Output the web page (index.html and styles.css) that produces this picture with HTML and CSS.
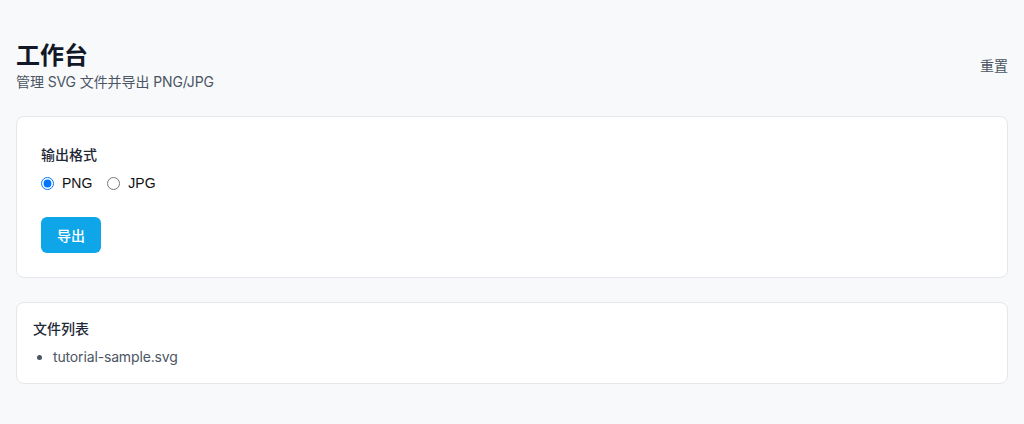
FILE: index.html
```html
<!DOCTYPE html>
<html lang="zh-CN">
<head>
<meta charset="utf-8">
<title>工作台</title>
<link rel="stylesheet" href="styles.css">
</head>
<body>
<div class="page">
  <header class="header">
    <div class="titles">
      <h1 class="title">工作台</h1>
      <p class="subtitle">管理 SVG 文件并导出 PNG/JPG</p>
    </div>
    <button class="reset" type="button">重置</button>
  </header>

  <section class="card card-export">
    <div class="label">输出格式</div>
    <div class="radios">
      <label class="radio"><input type="radio" name="fmt" checked> <span>PNG</span></label>
      <label class="radio"><input type="radio" name="fmt"> <span>JPG</span></label>
    </div>
    <button class="btn" type="button">导出</button>
  </section>

  <section class="card card-files">
    <div class="files-title">文件列表</div>
    <ul class="files">
      <li>tutorial-sample.svg</li>
    </ul>
  </section>
</div>
</body>
</html>
```
FILE: styles.css
```css
* { box-sizing: border-box; }
html, body { margin: 0; padding: 0; }
body {
  background: #f8f9fb;
  font-family: "Inter", "Noto Sans CJK SC", sans-serif;
  color: #111827;
}
.page {
  padding: 40px 16px 24px;
  display: flex;
  flex-direction: column;
  gap: 24px;
}
.header {
  display: flex;
  align-items: center;
  justify-content: space-between;
}
.title {
  margin: 0;
  font-size: 24px;
  line-height: 32px;
  font-weight: 700;
  color: #111827;
}
.subtitle {
  margin: 0;
  font-size: 14px;
  line-height: 20px;
  color: #4b5563;
  letter-spacing: -0.1px;
}
.reset {
  background: none;
  border: 0;
  padding: 0;
  font: inherit;
  font-size: 14px;
  line-height: 20px;
  color: #4b5563;
  cursor: pointer;
}
.card {
  background: #fff;
  border: 1px solid #e5e7eb;
  border-radius: 8px;
}
.card-export {
  padding: 28px 24px 24px;
  display: flex;
  flex-direction: column;
  align-items: flex-start;
}
.label {
  font-size: 14px;
  line-height: 20px;
  font-weight: 500;
  color: #1f2937;
}
.radios {
  margin-top: 8px;
  display: flex;
  gap: 15px;
  height: 20px;
  align-items: center;
}
.radio {
  display: flex;
  align-items: center;
  gap: 8px;
  font-family: "Liberation Sans", "Noto Sans CJK SC", sans-serif;
  font-size: 14px;
  color: #111;
}
.radio input { margin: 0; width: 13px; height: 13px; }
.btn {
  margin-top: 24px;
  height: 36px;
  padding: 0 16px;
  border: 0;
  border-radius: 6px;
  background: #0ea5e9;
  color: #fff;
  font: inherit;
  font-size: 14px;
  font-weight: 500;
}
.card-files {
  padding: 16px;
}
.files-title {
  font-size: 14px;
  line-height: 20px;
  font-weight: 500;
  color: #1f2937;
}
.files {
  margin: 8px 0 0;
  padding-left: 20px;
  font-size: 14px;
  line-height: 20px;
  color: #4b5563;
  letter-spacing: -0.15px;
}
```
